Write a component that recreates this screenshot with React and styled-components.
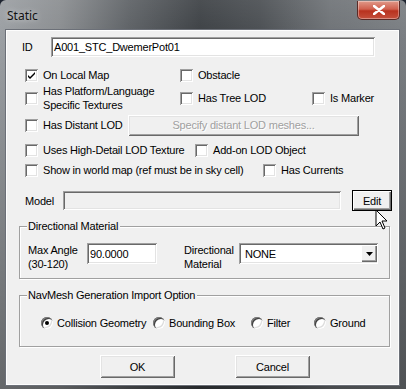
import React from "react";
import styled, { createGlobalStyle } from "styled-components";

const Global = createGlobalStyle`
  html, body { margin: 0; padding: 0; background: #1e2430; }
  body {
    font-family: "Liberation Sans", Arial, sans-serif;
    font-size: 11px;
    letter-spacing: -0.2px;
    color: #000;
  }
`;

const Frame = styled.div`
  position: relative;
  width: 406px;
  height: 389px;
  box-sizing: border-box;
  padding: 0 7px 4px 6px;
  display: flex;
  flex-direction: column;
  background:
    linear-gradient(180deg, rgba(255,255,255,0.08) 0px, rgba(0,0,0,0) 40px, rgba(0,0,0,0.35) 389px),
    linear-gradient(90deg, #9b9fa3 0px, #8a8d90 60px, #5c6064 130px, #3c4044 200px, #4a4e52 260px, #6e7276 330px, #7a7e82 406px);
  border-radius: 6px 6px 0 0;
`;

const TitleBar = styled.div`
  height: 30px;
  display: flex;
  align-items: flex-start;
  justify-content: space-between;
`;

const Title = styled.span`
  font-family: "Noto Sans", "Open Sans", sans-serif;
  font-size: 12px;
  letter-spacing: 0;
  margin: 7px 0 0 1px;
  color: #111;
  text-shadow: 0 0 6px rgba(255,255,255,0.7);
`;

const CloseBtn = styled.div`
  width: 43px;
  height: 19px;
  margin: 1px -1px 0 0;
  box-sizing: border-box;
  border: 1px solid #5a2a26;
  border-top: none;
  border-radius: 0 0 5px 5px;
  background: linear-gradient(180deg, #e09a8a 0%, #d0604e 45%, #b8321f 55%, #c4503c 100%);
  box-shadow: inset 0 0 0 1px rgba(255,255,255,0.35);
  display: flex;
  align-items: center;
  justify-content: center;
`;

const Client = styled.div`
  flex: 1;
  background: #f0f0f0;
  box-sizing: border-box;
  border: 1px solid #fdfdfd;
  outline: 1px solid #6c7078;
  padding: 6px 10px 0 11px;
  display: flex;
  flex-direction: column;
`;

const Row = styled.div`
  display: flex;
  align-items: center;
  height: ${(p) => p.h || 14}px;
  margin-top: ${(p) => p.mt || 0}px;
  padding-left: ${(p) => p.pl || 0}px;
`;

const Cell = styled.div`
  width: ${(p) => (p.w ? p.w + "px" : "auto")};
  flex: ${(p) => (p.w ? "none" : 1)};
  display: flex;
  align-items: center;
`;

const Text = styled.span`
  line-height: 14px;
  white-space: nowrap;
  color: ${(p) => (p.disabled ? "#a0a0a0" : "#000")};
`;

const sunken = `
  box-shadow: inset 1px 1px #a0a0a0, inset -1px -1px #ffffff, inset 2px 2px #696969, inset -2px -2px #e3e3e3;
`;

const Box = styled.span`
  width: 13px;
  height: 13px;
  flex: none;
  background: #fff;
  ${sunken}
  margin-right: 5px;
  display: flex;
  align-items: center;
  justify-content: center;
`;

const RadioDot = styled.span`
  width: 12px;
  height: 12px;
  flex: none;
  border-radius: 50%;
  background: #fff;
  box-shadow: inset 1px 1px #808080, inset 2px 2px #404040, inset -1px -1px #ffffff, inset -2px -2px #dcdcdc;
  margin-right: 4px;
  display: flex;
  align-items: center;
  justify-content: center;
  &::after {
    content: "";
    width: 4px;
    height: 4px;
    border-radius: 50%;
    background: ${(p) => (p.$on ? "#000" : "transparent")};
  }
`;

const Field = styled.div`
  width: ${(p) => p.w}px;
  height: ${(p) => p.h || 20}px;
  box-sizing: border-box;
  background: ${(p) => (p.disabled ? "#f0f0f0" : "#fff")};
  ${sunken}
  padding: 0 3px;
  display: flex;
  align-items: center;
  white-space: nowrap;
  flex: none;
`;

const Button = styled.div`
  width: ${(p) => p.w}px;
  height: ${(p) => p.h || 23}px;
  box-sizing: border-box;
  background: #f0f0f0;
  box-shadow: ${(p) =>
    p.$focus
      ? "inset 1px 1px #000, inset -1px -1px #000, inset 2px 2px #fff, inset -2px -2px #696969, inset -3px -3px #a0a0a0"
      : "inset 1px 1px #fff, inset -1px -1px #696969, inset 2px 2px #e3e3e3, inset -2px -2px #a0a0a0"};
  display: flex;
  align-items: center;
  justify-content: center;
  color: ${(p) => (p.disabled ? "#a0a0a0" : "#000")};
  text-shadow: ${(p) => (p.disabled ? "1px 1px #fff" : "none")};
  flex: none;
`;

const Group = styled.div`
  position: relative;
  margin: ${(p) => p.mt}px 0 0 1px;
  padding: ${(p) => p.pt}px 0 0 8px;
  width: 371px;
  height: ${(p) => p.h}px;
  box-sizing: border-box;
  border: 1px solid #a0a0a0;
  box-shadow: inset 1px 1px #fff, 1px 1px #fff;
  display: flex;
  align-items: flex-start;
`;

const Caption = styled.span`
  position: absolute;
  left: 7px;
  top: -8px;
  padding: 0 2px 0 1px;
  background: #f0f0f0;
  line-height: 14px;
`;

const DropArrow = styled.span`
  width: 16px;
  height: 17px;
  margin-left: auto;
  margin-right: -1px;
  background: #f0f0f0;
  box-shadow: inset 1px 1px #fff, inset -1px -1px #696969, inset -2px -2px #a0a0a0;
  display: flex;
  align-items: center;
  justify-content: center;
`;

const Footer = styled.div`
  display: flex;
  gap: 60px;
  padding-left: 82px;
  margin-top: 8px;
`;

const Cursor = styled.svg`
  position: absolute;
  left: 375px;
  top: 209px;
`;

const Check = ({ label, on, lines }) => (
  <>
    <Box>
      {on && (
        <svg width="9" height="9" viewBox="0 0 9 9">
          <path d="M1 4 L3 6 L8 1 L8 3 L3 8 L1 6 Z" fill="#000" />
        </svg>
      )}
    </Box>
    {lines ? (
      <Text>
        {lines[0]}
        <br />
        {lines[1]}
      </Text>
    ) : (
      <Text>{label}</Text>
    )}
  </>
);

const Radio = ({ label, on, w }) => (
  <Cell w={w}>
    <RadioDot $on={on} />
    <Text>{label}</Text>
  </Cell>
);

export default function App() {
  return (
    <>
      <Global />
      <Frame>
        <TitleBar>
          <Title>Static</Title>
          <CloseBtn>
            <svg width="12" height="10" viewBox="0 0 12 10">
              <path d="M1 1 L11 9 M11 1 L1 9" stroke="#fff" strokeWidth="2.6" strokeLinecap="round" />
            </svg>
          </CloseBtn>
        </TitleBar>
        <Client>
          <Row h={20} pl={4}>
            <Cell w={29}>
              <Text>ID</Text>
            </Cell>
            <Field w={324}>A001_STC_DwemerPot01</Field>
          </Row>
          <Row mt={11} pl={7}>
            <Cell w={155}>
              <Check label="On Local Map" on />
            </Cell>
            <Cell w={132}>
              <Check label="Obstacle" />
            </Cell>
          </Row>
          <Row h={28} mt={2} pl={7}>
            <Cell w={155}>
              <Check lines={["Has Platform/Language", "Specific Textures"]} />
            </Cell>
            <Cell w={132}>
              <Check label="Has Tree LOD" />
            </Cell>
            <Cell>
              <Check label="Is Marker" />
            </Cell>
          </Row>
          <Row h={20} mt={3} pl={7}>
            <Cell w={103}>
              <Check label="Has Distant LOD" />
            </Cell>
            <Button w={231} h={21} disabled>
              Specify distant LOD meshes...
            </Button>
          </Row>
          <Row mt={8} pl={7}>
            <Cell w={170}>
              <Check label="Uses High-Detail LOD Texture" />
            </Cell>
            <Cell>
              <Check label="Add-on LOD Object" />
            </Cell>
          </Row>
          <Row mt={6} pl={7}>
            <Cell w={238}>
              <Check label="Show in world map (ref must be in sky cell)" />
            </Cell>
            <Cell>
              <Check label="Has Currents" />
            </Cell>
          </Row>
          <Row h={21} mt={13} pl={7}>
            <Cell w={38}>
              <Text>Model</Text>
            </Cell>
            <Field w={278} h={19} disabled />
            <Cell w={11} />
            <Button w={40} h={21} $focus>
              Edit
            </Button>
          </Row>
          <Group mt={15} h={53} pt={16}>
            <Caption>Directional Material</Caption>
            <Cell w={59}>
              <Text>
                Max Angle
                <br />
                (30-120)
              </Text>
            </Cell>
            <Field w={70} h={21}>
              90.0000
            </Field>
            <Cell w={27} />
            <Cell w={55}>
              <Text>
                Directional
                <br />
                Material
              </Text>
            </Cell>
            <Field w={139} h={21} style={{ paddingLeft: 6, paddingRight: 2 }}>
              NONE
              <DropArrow>
                <svg width="7" height="4" viewBox="0 0 7 4">
                  <path d="M0 0 H7 L3.5 4 Z" fill="#000" />
                </svg>
              </DropArrow>
            </Field>
          </Group>
          <Group mt={16} h={52} pt={20}>
            <Caption>NavMesh Generation Import Option</Caption>
            <Cell w={13} />
            <Radio label="Collision Geometry" on w={112} />
            <Radio label="Bounding Box" w={98} />
            <Radio label="Filter" w={63} />
            <Radio label="Ground" />
          </Group>
          <Footer>
            <Button w={75}>OK</Button>
            <Button w={75}>Cancel</Button>
          </Footer>
        </Client>
        <Cursor width="14" height="22" viewBox="0 0 14 22">
          <path d="M1 1 L1 17 L5 13 L8 20 L10 19 L7 12 L12 12 Z" fill="#fff" stroke="#000" strokeWidth="1" strokeLinejoin="round" />
        </Cursor>
      </Frame>
    </>
  );
}
